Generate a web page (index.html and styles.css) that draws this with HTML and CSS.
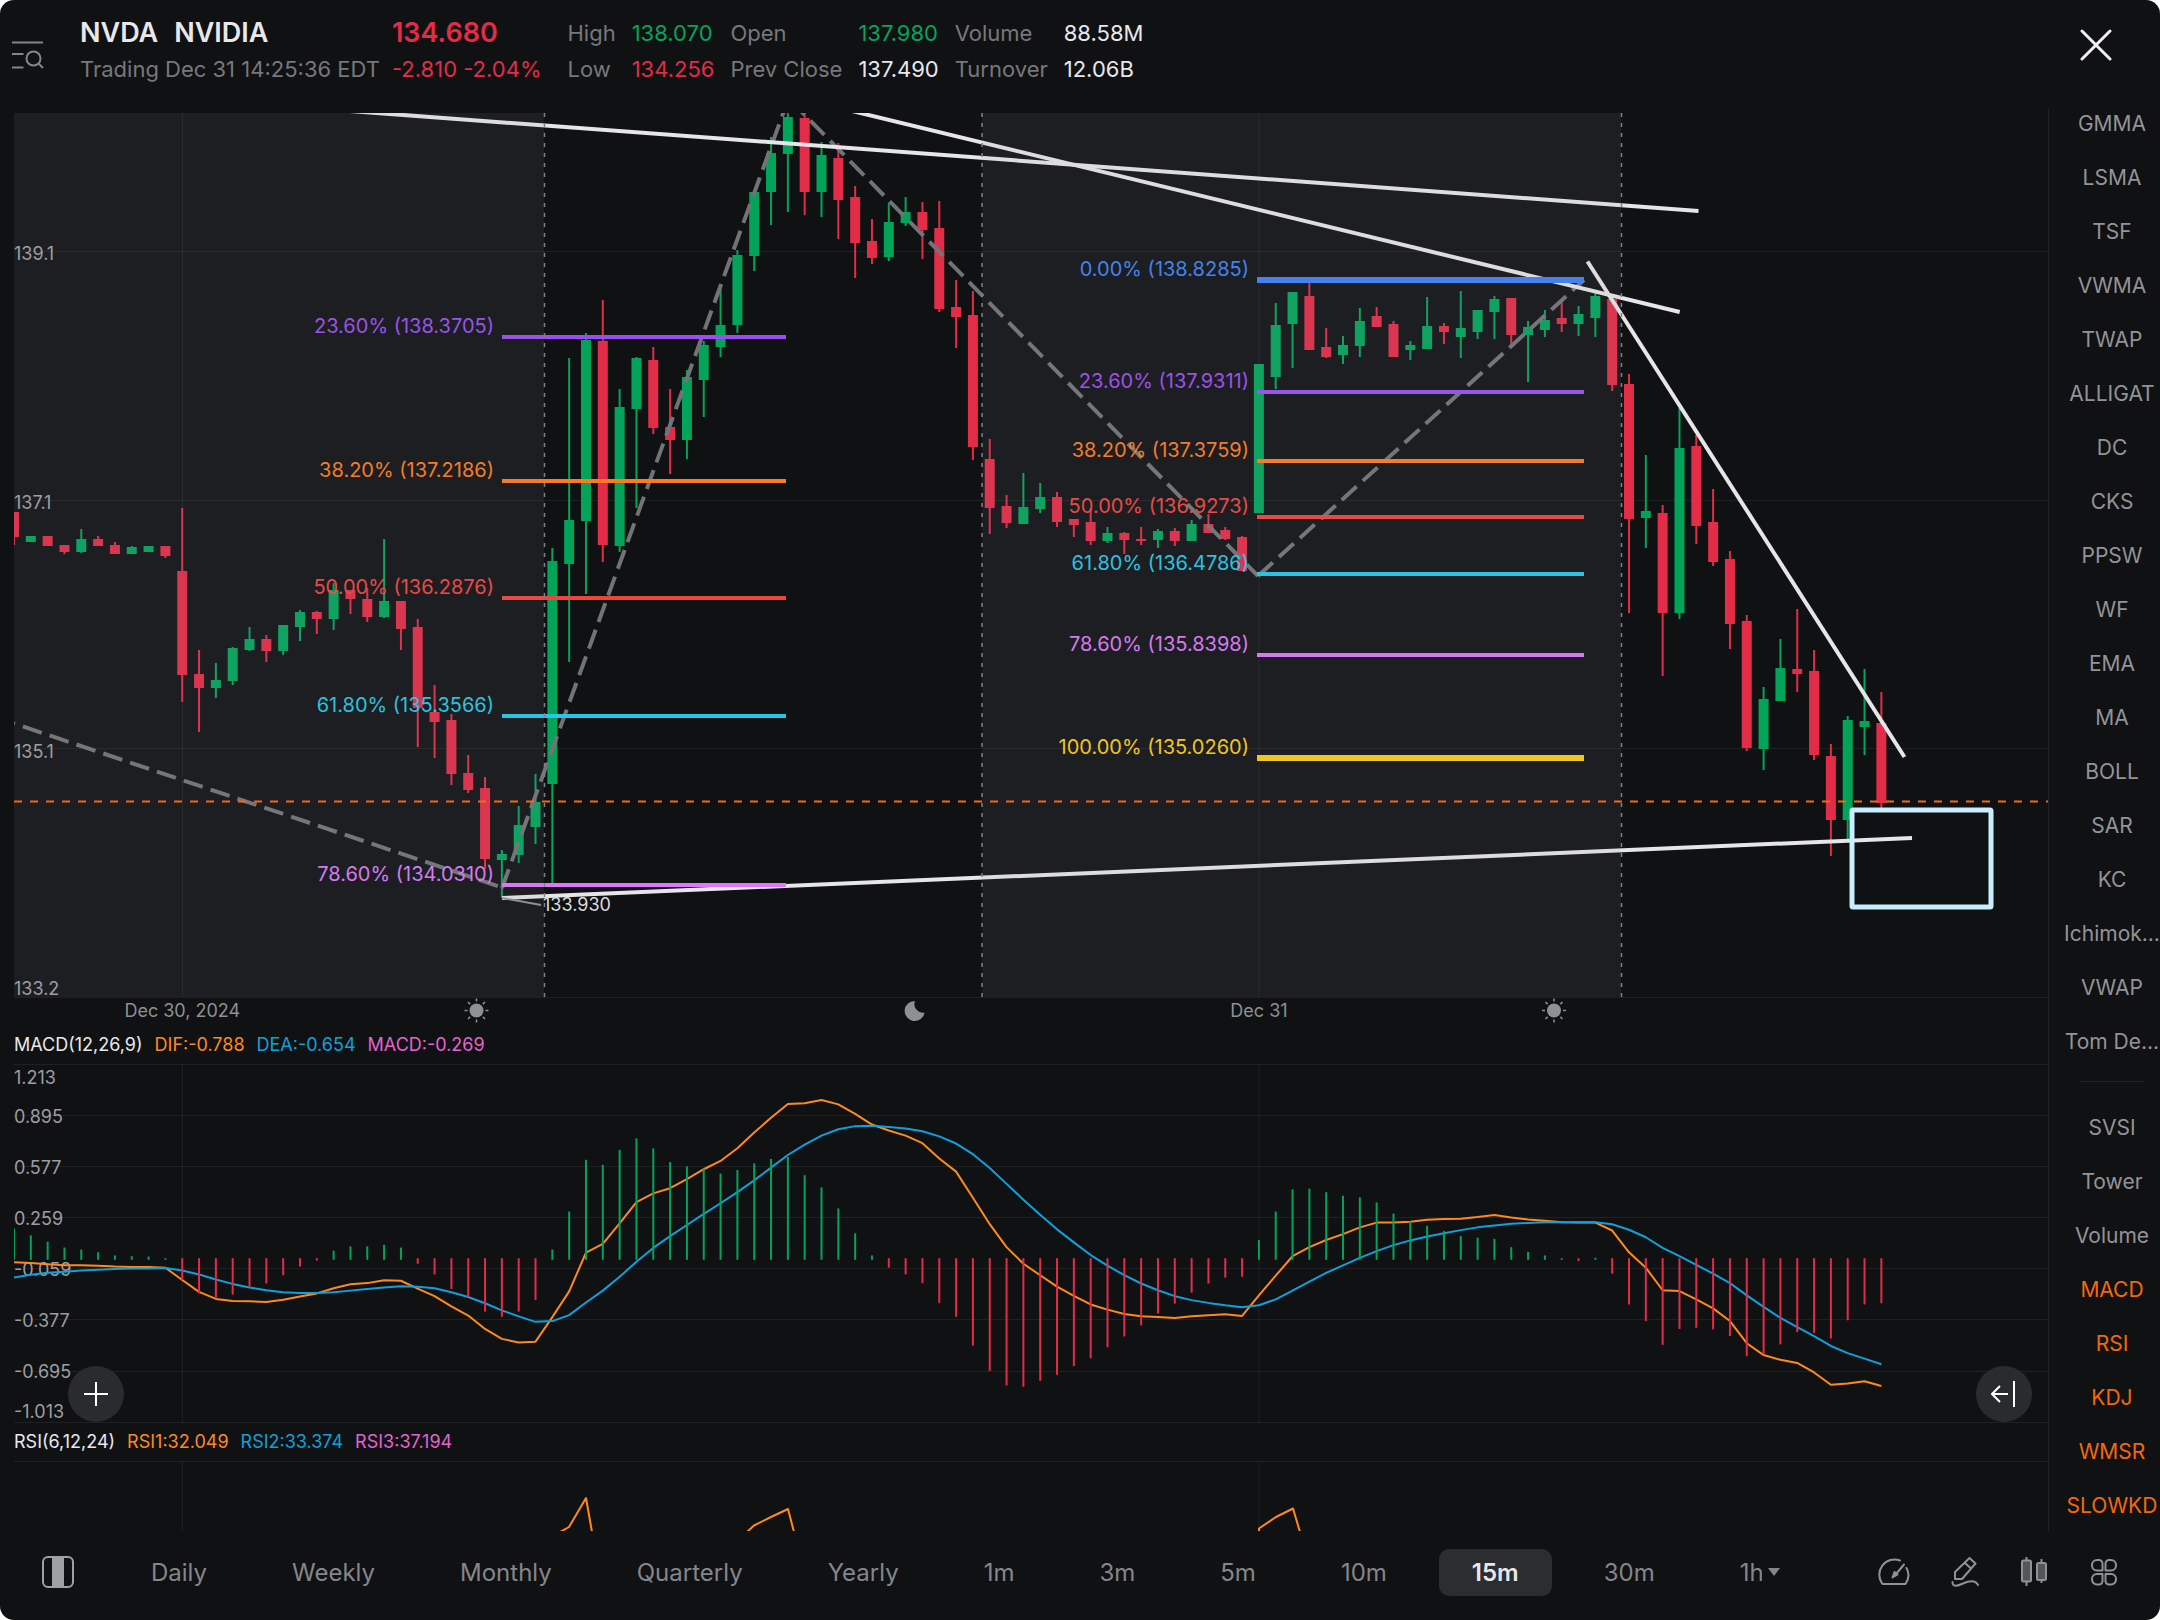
FILE: index.html
```html
<!DOCTYPE html>
<html lang="en">
<head>
<meta charset="utf-8">
<meta name="viewport" content="width=device-width, initial-scale=1">
<title>NVDA NVIDIA</title>
<link rel="stylesheet" href="styles.css">
</head>
<body>
<div class="app">
  <header class="quote">
    <button class="icon-btn quote-search" type="button" aria-label="Search list">
      <svg width="32" height="32" viewBox="0 0 32 32" fill="none" stroke="#85868a" stroke-width="2">
        <path d="M0 3.5h31M0 15h11.500M0 28.500h11.500"/><circle cx="21.500" cy="19.500" r="7"/><path d="M26.500 24.500l4.500 4.500"/>
      </svg>
    </button>
    <div class="quote-title">
      <h1 class="quote-name"><span>NVDA</span><span>NVIDIA</span></h1>
      <p class="quote-time">Trading Dec 31 14:25:36 EDT</p>
    </div>
    <div class="quote-price down">
      <p class="quote-last">134.680</p>
      <p>-2.810 -2.04%</p>
    </div>
    <dl class="quote-stats">
      <dt>High</dt><dd class="up">138.070</dd>
      <dt>Open</dt><dd class="up">137.980</dd>
      <dt>Volume</dt><dd>88.58M</dd>
      <dt>Low</dt><dd class="down">134.256</dd>
      <dt>Prev Close</dt><dd>137.490</dd>
      <dt>Turnover</dt><dd>12.06B</dd>
    </dl>
    <button class="icon-btn quote-close" type="button" aria-label="Close">
      <svg width="32" height="32" viewBox="0 0 32 32" fill="none" stroke="#f0f0f2" stroke-width="3" stroke-linecap="round"><path d="M2 2l28 28M30 2L2 30"/></svg>
    </button>
  </header>

  <main class="workspace">
    <section class="charts" aria-label="Charts">
      <svg class="pane" id="price" viewBox="14 113 2034 913" role="img" aria-label="Price, 15 minutes"></svg>
      <p class="legend"><span>MACD(12,26,9)</span><span class="s1">DIF:-0.788</span><span class="s2">DEA:-0.654</span><span class="s3">MACD:-0.269</span></p>
      <svg class="pane" id="macd" viewBox="14 1064 2034 359" role="img" aria-label="MACD"></svg>
      <p class="legend"><span>RSI(6,12,24)</span><span class="s1">RSI1:32.049</span><span class="s2">RSI2:33.374</span><span class="s3">RSI3:37.194</span></p>
      <svg class="pane" id="rsi" viewBox="14 1461 2034 70" role="img" aria-label="RSI"></svg>
      <button class="float-btn float-left" type="button" aria-label="Add">
        <svg width="24" height="24" viewBox="0 0 24 24" stroke="#fff" stroke-width="2"><path d="M12 0v24M0 12h24"/></svg>
      </button>
      <button class="float-btn float-right" type="button" aria-label="Jump to latest">
        <svg width="26" height="26" viewBox="0 0 26 26" fill="none" stroke="#fff" stroke-width="2"><path d="M17 13H1M9 5l-8 8 8 8M23 0v26"/></svg>
      </button>
    </section>

    <nav class="indicators" aria-label="Indicators">
      <div class="group">
        <button type="button">GMMA</button><button type="button">LSMA</button><button type="button">TSF</button><button type="button">VWMA</button><button type="button">TWAP</button><button type="button">ALLIGAT</button><button type="button">DC</button><button type="button">CKS</button><button type="button">PPSW</button><button type="button">WF</button><button type="button">EMA</button><button type="button">MA</button><button type="button">BOLL</button><button type="button">SAR</button><button type="button">KC</button><button type="button">Ichimok...</button><button type="button">VWAP</button><button type="button">Tom De...</button>
      </div>
      <hr>
      <div class="group">
        <button type="button">SVSI</button><button type="button">Tower</button><button type="button">Volume</button><button type="button" class="on">MACD</button><button type="button" class="on">RSI</button><button type="button" class="on">KDJ</button><button type="button" class="on">WMSR</button><button type="button" class="on">SLOWKD</button>
      </div>
    </nav>
  </main>

  <footer class="toolbar">
    <button class="icon-btn" type="button" aria-label="Toggle layout">
      <svg width="32" height="32" viewBox="0 0 32 32"><rect x="1" y="1" width="30" height="30" rx="5" fill="none" stroke="#a0a1a5" stroke-width="2"/><path d="M10 1h12v30H10z" fill="#a0a1a5"/></svg>
    </button>
    <div class="periods">
      <button type="button">Daily</button><button type="button">Weekly</button><button type="button">Monthly</button><button type="button">Quarterly</button><button type="button">Yearly</button><button type="button">1m</button><button type="button">3m</button><button type="button">5m</button><button type="button">10m</button><button type="button" class="on">15m</button><button type="button">30m</button>
      <label class="period-select"><select aria-label="Hourly period"><option>1h</option><option>2h</option><option>4h</option></select><svg width="12" height="8" viewBox="0 0 12 8"><path d="M0 0h12L6 8z" fill="#85868a"/></svg></label>
    </div>
    <div class="tools">
      <button class="icon-btn" type="button" aria-label="Performance">
        <svg width="32" height="32" viewBox="0 0 32 32" fill="none" stroke="#909195" stroke-width="2" stroke-linejoin="round" stroke-linecap="round"><path d="M22 4.500A15.200 15.200 0 0 0 4.500 28h23a15.200 15.200 0 0 0 1-16"/><path d="M26 8.500L18 18"/><path d="M14.500 21.500l2-5.500 3 2.500z" fill="#909195"/></svg>
      </button>
      <button class="icon-btn" type="button" aria-label="Draw">
        <svg width="32" height="32" viewBox="0 0 32 32" fill="none" stroke="#909195" stroke-width="2" stroke-linejoin="round" stroke-linecap="round"><path d="M21.500 2l6 5.500-13.500 15.500H7v-7zM17 7l6 5.500"/><path d="M4.500 26c0 6 6 3.500 10.500 1.500s12-4.500 15 1.500"/></svg>
      </button>
      <button class="icon-btn" type="button" aria-label="Chart type">
        <svg width="32" height="32" viewBox="0 0 32 32" fill="#55565a" stroke="#909195" stroke-width="2"><path d="M8.500 1v4M8.500 25v5M23.500 3v4M23.500 23v4"/><rect x="4" y="4.500" width="9" height="21" rx="1.500"/><rect x="19" y="7" width="9" height="17" rx="1.500"/></svg>
      </button>
      <button class="icon-btn" type="button" aria-label="More">
        <svg width="32" height="32" viewBox="0 0 32 32" fill="none" stroke="#909195" stroke-width="2" stroke-linejoin="round"><path d="M9 4h2a3.500 3.500 0 0 1 3.500 3.500v7H9a5 5 0 0 1-5-5V9a5 5 0 0 1 5-5z"/><path d="M23 4h-2a3.500 3.500 0 0 0-3.500 3.500v7H23a5 5 0 0 0 5-5V9a5 5 0 0 0-5-5z"/><path d="M9 28.500h2a3.500 3.500 0 0 0 3.500-3.500v-7H9a5 5 0 0 0-5 5v.500a5 5 0 0 0 5 5z"/><path d="M23 28.500h-2a3.500 3.500 0 0 1-3.500-3.500v-7H23a5 5 0 0 1 5 5v.500a5 5 0 0 1-5 5z"/></svg>
      </button>
    </div>
  </footer>
</div>
<script src="chart.js"></script>
</body>
</html>
```
FILE: styles.css
```css
* { box-sizing: border-box; }
html { background: #fff; }
body { margin: 0; font-family: Inter, "Liberation Sans", sans-serif; color: #e8e8ea; }
h1, p, dl, dd { margin: 0; }
button, select { font: inherit; color: inherit; background: none; border: 0; padding: 0; margin: 0; cursor: pointer; }
svg { display: block; }

.app { display: flex; flex-direction: column; min-height: 100vh; background: #101113; border-radius: 14px; overflow: hidden; }
.up { color: #06a35a; }
.down { color: #e22c48; }
.icon-btn { display: flex; align-items: center; justify-content: center; width: 32px; flex: none; }

.quote { display: flex; align-items: flex-start; height: 109px; padding: 15px 48px 0 12px; font-size: 22px; line-height: 36px; white-space: nowrap; }
.quote-search { height: 80px; margin-right: 36px; }
.quote-title { margin-right: 12px; }
.quote-name { display: flex; gap: 16px; font-size: 27px; font-weight: 600; line-height: 36px; }
.quote-time { color: #77787b; }
.quote-price { margin-right: 26px; }
.quote-last { font-size: 27px; font-weight: 600; }
.quote-stats { display: grid; grid-template-columns: repeat(6, auto); column-gap: 16px; }
.quote-stats dt { color: #77787b; }
.quote-close { height: 60px; margin-left: auto; }

.workspace { flex: 1; display: grid; grid-template-columns: minmax(0, 1fr) 112px; }
.charts { position: relative; padding: 4px 0 0 14px; overflow: hidden; }
.pane { width: 100%; height: auto; font-size: 18px; }
.legend { display: flex; gap: 12px; font-size: 18px; line-height: 38px; }
.s1 { color: #ff8a1c; }
.s2 { color: #10a0dc; }
.s3 { color: #e263d2; }
.axis { fill: #8f9093; }
.price-axis { fill: #9d9ea1; }
.fib { font-size: 20px; text-anchor: end; }

.float-btn { position: absolute; bottom: 109px; display: flex; align-items: center; justify-content: center; width: 56px; height: 56px; border-radius: 50%; background: #2a2b2e; }
.float-left { left: 68px; }
.float-right { right: 16px; }

.indicators { border-left: 1px solid #222326; padding: 3px 0 13px 15px; font-size: 21px; line-height: 24px; color: #939497; }
.indicators hr { width: 64px; height: 1px; margin: 27px auto 34px; border: 0; background: #222326; }
.group { display: flex; flex-direction: column; align-items: center; gap: 30px; }
.group button { white-space: nowrap; }
.group .on { color: #f4690a; }

.toolbar { display: flex; align-items: center; height: 89px; padding: 0 40px 7px 42px; font-size: 24px; color: #85868a; }
.periods { display: flex; gap: 19px; margin-left: 44px; }
.periods button, .period-select { height: 47px; padding: 0 33px; border-radius: 10px; }
.periods .on { background: #2b2d31; color: #e8e8ea; font-weight: 600; }
.period-select { display: flex; align-items: center; gap: 6px; }
.period-select select { appearance: none; width: 22px; }
.tools { display: flex; gap: 38px; margin-left: auto; }
```
FILE: chart.js
```javascript
const LEFT = 14, RIGHT = 2048, STEP = 16.823;
const DAYS = [182.3, 1259];
const GREEN = '#02a45a', RED = '#e22c48', GRID = 'rgba(255,255,255,.065)';
const xAt = i => LEFT + STEP * i;

const line = (x1, y1, x2, y2, stroke, w = 1, extra = '') =>
  `<line x1="${x1}" y1="${y1}" x2="${x2}" y2="${y2}" stroke="${stroke}" stroke-width="${w}" ${extra}/>`;
const rect = (x, y, w, h, fill, extra = '') =>
  `<rect x="${x}" y="${y}" width="${w}" height="${h}" fill="${fill}" ${extra}/>`;
const text = (x, y, s, cls, extra = '') => `<text x="${x}" y="${y}" class="${cls}" ${extra}>${s}</text>`;
const poly = (pts, stroke) =>
  `<polyline points="${pts.map(p => p.join(',')).join(' ')}" fill="none" stroke="${stroke}" stroke-width="2" stroke-linejoin="round"/>`;

/* direction, high, body top, body bottom, low */
const candles = [
  ['r',512,512,537,545],['g',536,536,542,542],['r',536,536,546,546],['r',545,545,552,554],['g',529,539,552,553],
  ['r',536,539,546,546],['r',542,545,554,554],['g',546,547,554,554],['g',546,546,552,552],['r',546,546,556,558],
  ['r',508,571,675,702],['r',650,674,688,732],['g',663,680,688,698],['g',647,648,681,685],['g',627,639,650,651],
  ['r',635,639,651,662],['g',625,625,651,655],['g',610,612,627,641],['r',611,612,619,634],['g',583,590,619,630],
  ['r',590,590,599,614],['r',588,599,617,622],['g',539,601,617,618],['r',601,601,629,650],['r',619,627,708,747],
  ['r',685,712,722,758],['r',714,720,774,785],['r',755,773,790,793],['r',777,788,859,869],['g',850,854,860,898],
  ['g',806,825,855,863],['g',774,802,827,844],['g',548,561,784,883],['g',358,520,564,662],['g',333,340,521,594],
  ['r',300,341,545,562],['g',389,407,546,552],['g',357,358,409,508],['r',347,360,428,434],['r',389,427,440,474],
  ['g',370,377,440,459],['g',341,345,380,417],['g',285,325,347,357],['g',250,255,325,333],['g',192,192,256,271],
  ['g',137,153,192,225],['g',108,117,154,212],['r',108,118,192,215],['g',142,155,192,217],['r',143,158,200,239],
  ['r',186,197,243,278],['r',219,241,258,264],['g',203,222,257,261],['g',197,212,223,226],['r',202,212,230,259],
  ['r',201,228,309,312],['r',280,307,317,348],['r',291,315,447,460],['r',439,459,508,534],['r',495,506,523,528],
  ['g',473,507,524,524],['g',483,497,509,513],['r',492,497,522,527],['r',519,519,525,537],['r',508,522,541,545],
  ['g',527,533,541,543],['r',532,533,540,554],['r',527,539,540,545],['g',529,531,540,548],['r',528,531,541,546],
  ['g',520,524,541,541],['r',514,524,533,533],['r',527,530,539,540],['r',536,537,571,571],['g',364,364,513,513],
  ['g',303,325,377,389],['g',292,292,324,368],['r',283,296,350,350],['r',328,347,357,358],['g',336,345,355,364],
  ['g',308,321,346,357],['r',307,316,327,327],['r',321,324,357,357],['g',341,345,350,360],['g',297,326,349,349],
  ['r',323,326,332,344],['g',291,328,337,358],['g',310,310,332,339],['g',296,299,312,339],['r',298,298,335,345],
  ['g',321,327,335,382],['g',310,320,330,337],['r',300,318,324,332],['g',306,314,324,336],['g',293,296,318,337],
  ['r',296,299,385,391],['r',374,384,519,613],['g',455,511,518,548],['r',505,513,613,676],['g',408,448,613,619],
  ['r',435,446,526,544],['r',489,522,562,566],['r',551,559,624,649],['r',615,621,748,751],['g',687,699,749,770],
  ['g',639,668,701,701],['r',609,669,674,692],['r',650,671,755,760],['r',744,756,820,856],['g',716,720,820,839],
  ['g',669,721,727,755],['r',692,723,803,808]
];

function drawPrice() {
  let s = rect(LEFT, 113, 530, 884, '#101113');
  [251.5, 500.5, 748.5, 997.5].forEach(y => { s += line(LEFT, y, RIGHT, y, GRID); });
  DAYS.forEach(x => { s += line(x, 113, x, 997, GRID); });

  candles.forEach(([dir, hi, top, bottom, lo], i) => {
    const c = dir === 'g' ? GREEN : RED, x = xAt(i);
    s += rect(x - 1, hi, 2, lo - hi, c) + rect(x - 5, top, 10, Math.max(bottom - top, 2), c);
  });

  /* swing path */
  const swing = [[14, 723.5, 502, 887.5, 19], [502, 888, 788.5, 98.5, 0], [790.5, 100.5, 1258, 576, 0], [1258, 576, 1584, 280, 0]];
  swing.forEach(([a, b, c, d, off]) => { s += line(a, b, c, d, '#727377', 4, `stroke-dasharray="20 8.300" stroke-dashoffset="${off}"`); });

  /* trend lines */
  [[340, 110.3, 1698.5, 211], [848, 110, 1679.7, 312], [1587.5, 261.5, 1904.5, 757], [502, 898, 1912, 838]]
    .forEach(([a, b, c, d]) => { s += line(a, b, c, d, '#e6e6e8', 4); });

  const fib = (x1, x2, levels) => levels.forEach(([label, y, c, w]) => {
    s += line(x1, y, x2, y, c, w || 4) + text(x1 - 8, y - 4, label, 'fib', `fill="${c}"`);
  });
  fib(502, 786, [
    ['23.60% (138.3705)', 337, '#9b4cf2'], ['38.20% (137.2186)', 481, '#ff7a1f'], ['50.00% (136.2876)', 598, '#f2423f'],
    ['61.80% (135.3566)', 716, '#22c8e8'], ['78.60% (134.0310)', 885, '#dd78fa']]);
  fib(1257, 1584, [
    ['0.00% (138.8285)', 280, '#3b82f6', 6], ['23.60% (137.9311)', 392, '#9b4cf2'], ['38.20% (137.3759)', 461, '#ff7a1f'],
    ['50.00% (136.9273)', 517, '#f2423f'], ['61.80% (136.4786)', 574, '#22c8e8'], ['78.60% (135.8398)', 655, '#dd78fa'],
    ['100.00% (135.0260)', 758, '#facc15', 6]]);

  s += line(502, 898, 541, 905, '#8f9093', 2) + text(543, 911, '133.930', '', 'fill="#dcdcde"');

  /* extended-hours shading */
  s += rect(LEFT, 113, 530, 884, 'rgba(150,152,155,.1)') + rect(982, 113, 639, 884, 'rgba(150,152,155,.1)');
  [544.5, 982, 1621.5].forEach(x => { s += line(x, 113, x, 997, '#808184', 1.5, 'stroke-dasharray="4 6"'); });

  s += line(LEFT, 801.5, RIGHT, 801.5, '#f2690f', 2, 'stroke-dasharray="8 8"');
  s += `<rect x="1852" y="810" width="139" height="97" rx="1" fill="none" stroke="#c9efff" stroke-width="5"/>`;

  [['139.1', 260], ['137.1', 509], ['135.1', 758], ['133.2', 995]].forEach(([t, y]) => { s += text(14, y, t, 'price-axis'); });
  s += text(DAYS[0], 1017, 'Dec 30, 2024', 'axis', 'text-anchor="middle"') + text(DAYS[1], 1017, 'Dec 31', 'axis', 'text-anchor="middle"');
  [476.5, 1554].forEach(x => {
    s += `<g transform="translate(${x} 1010.500)"><circle r="7" fill="#8f9093"/>`;
    for (let a = 0; a < 360; a += 45) s += `<path d="M0 -9v-3" stroke="#8f9093" stroke-width="1.500" transform="rotate(${a})"/>`;
    s += '</g>';
  });
  s += '<path d="M915 1001a10 10 0 1 0 9.500 11.500a8.500 8.500 0 0 1-9.500-11.500z" fill="#8f9093"/>';
  document.getElementById('price').innerHTML = s;
}

/* Series run in axis units downwards; the histogram grows from BASE */
const BASE = 655;
const unitY = v => 1000 + v / 2.529;
const hist = [578,595,611,626,631,638,646,648,649,653,708,742,755,745,727,717,696,674,659,634,623,623,619,626,667,694,731,751,788,801,788,759,
  631,535,404,417,379,350,375,410,421,426,439,430,413,402,397,443,474,527,590,646,677,694,716,766,801,874,938,975,978,963,948,926,906,878,851,
  823,793,768,740,717,702,700,607,535,479,477,486,495,499,512,540,560,571,584,597,601,604,625,637,646,653,660,652,692,770,812,872,832,829,833,
  850,901,897,871,840,842,856,810,770,767];
const dif = [663,665,668,671,671,672,674,675,675,677,708,738,756,761,762,764,758,750,742,729,719,716,709,710,730,749,775,798,832,857,866,864,
  802,737,639,617,565,511,489,476,453,428,407,375,335,298,263,261,253,264,288,315,330,343,362,401,434,500,567,625,667,696,725,748,770,783,794,
  800,802,804,800,797,795,799,747,697,648,625,607,592,575,563,563,561,556,554,553,549,544,550,555,558,562,563,563,583,638,677,734,736,757,780,
  812,868,898,910,918,942,973,970,964,976];
const dea = [702,695,690,687,684,682,680,679,679,678,684,694,707,718,727,734,739,741,741,739,735,731,727,724,725,729,739,751,767,785,800,814,
  812,797,765,735,700,662,627,597,569,541,514,486,456,424,392,366,343,327,319,318,321,325,332,345,363,390,425,465,505,543,580,613,645,672,696,
  717,734,749,759,766,772,777,772,757,735,712,690,671,652,635,620,608,598,590,582,575,570,566,564,562,562,562,562,567,581,600,627,648,670,692,
  716,747,776,804,827,850,875,893,907,921];

function drawMacd() {
  let s = '';
  [1064.5, 1115.5, 1166.5, 1217.5, 1268.5, 1319.5, 1371.5, 1422.5].forEach(y => { s += line(LEFT, y, RIGHT, y, GRID); });
  DAYS.forEach(x => { s += line(x, 1064, x, 1423, GRID); });
  [['1.213', 1084], ['0.895', 1123], ['0.577', 1174], ['0.259', 1225], ['-0.059', 1276], ['-0.377', 1327], ['-0.695', 1378], ['-1.013', 1418]]
    .forEach(([t, y]) => { s += text(14, y, t, 'price-axis'); });
  s += poly(dif.map((v, i) => [xAt(i), unitY(v)]), '#ff8a1c') + poly(dea.map((v, i) => [xAt(i), unitY(v)]), '#10a0dc');
  hist.forEach((v, i) => {
    const top = unitY(Math.min(v, BASE - 2)), bottom = unitY(Math.max(v, BASE + 2));
    s += rect(xAt(i) - 1, top, 2, bottom - top, v < BASE ? GREEN : RED);
  });
  document.getElementById('macd').innerHTML = s;
}

function drawRsi() {
  let s = line(LEFT, 1461.5, RIGHT, 1461.5, GRID);
  DAYS.forEach(x => { s += line(x, 1462, x, 1531, GRID); });
  [[[560, 1532], [569, 1527], [586, 1498], [592, 1532]],
   [[747, 1532], [754, 1525.5], [771, 1517], [788, 1509], [794, 1532]],
   [[1259, 1532], [1259, 1528.5], [1276, 1517], [1293, 1508.5], [1300, 1532]]]
    .forEach(p => { s += poly(p, '#ff8a1c'); });
  document.getElementById('rsi').innerHTML = s;
}

drawPrice();
drawMacd();
drawRsi();
```
